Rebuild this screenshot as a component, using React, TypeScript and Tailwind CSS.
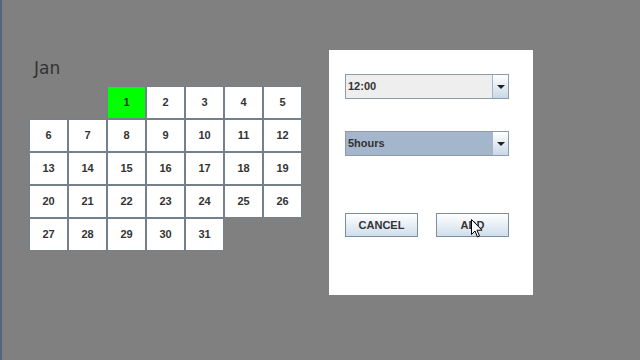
import React from "react";

const days = Array.from({ length: 31 }, (_, i) => i + 1);

function Combo({ value, selected }: { value: string; selected?: boolean }) {
  return (
    <div
      className={`flex h-[25px] w-[164px] border border-[#8e9aa8] ${
        selected ? "bg-[#a3b6cc]" : "bg-[#eeeeee]"
      }`}
    >
      <div className="flex flex-1 items-center pl-[2px] text-[11px] font-bold text-[#333333]">
        {value}
      </div>
      <div className="flex w-[16px] items-center justify-center border-l border-[#a9b4c0] bg-gradient-to-b from-[#ffffff] to-[#c9d8e8]">
        <svg width="8" height="4" viewBox="0 0 8 4">
          <polygon points="0,0 8,0 4,4" fill="#222222" />
        </svg>
      </div>
    </div>
  );
}

function JButton({ label, children }: { label: string; children?: React.ReactNode }) {
  return (
    <div className="relative flex h-[24px] w-[73px] items-center justify-center border border-[#7f8e9c] bg-gradient-to-b from-[#ffffff] to-[#cfdeec] text-[11px] font-bold text-[#333333]">
      {label}
      {children}
    </div>
  );
}

export default function App() {
  return (
    <div
      className="flex h-[360px] w-[640px] bg-[#808080]"
      style={{ fontFamily: "'Liberation Sans', Arial, sans-serif" }}
    >
      <div className="w-[2px] bg-[#56667a]" />

      <div className="ml-[27px] pt-[58px]">
        <div
          className="h-[28px] pl-[5px] text-[17px] leading-[20px] text-[#333333]"
          style={{ fontFamily: "'DejaVu Sans', sans-serif" }}
        >
          Jan
        </div>
        <div className="grid grid-cols-[repeat(7,39px)] auto-rows-[33px]">
          <div />
          <div />
          {days.map((d) => (
            <div
              key={d}
              className={`flex items-center justify-center border border-[#75808d] text-[11px] font-bold text-[#333333] ${
                d === 1 ? "border-[#00ff00] bg-[#00ff00]" : "bg-white"
              }`}
            >
              {d}
            </div>
          ))}
        </div>
      </div>

      <div className="ml-[27px] mt-[50px] flex h-[245px] w-[204px] flex-col bg-white px-[16px]">
        <div className="mt-[24px]">
          <Combo value="12:00" />
        </div>
        <div className="mt-[32px]">
          <Combo value="5hours" selected />
        </div>
        <div className="mt-[57px] flex gap-[18px]">
          <JButton label="CANCEL" />
          <JButton label="ADD">
            <svg
              className="absolute left-[34px] top-[5px]"
              width="12"
              height="19"
              viewBox="0 0 12 19"
            >
              <path
                d="M0.5 0.5 L0.5 15.5 L4 12 L6.5 18 L8.5 17 L6 11.2 L11 11.2 Z"
                fill="#ffffff"
                stroke="#000000"
                strokeWidth="1"
              />
            </svg>
          </JButton>
        </div>
      </div>
    </div>
  );
}
